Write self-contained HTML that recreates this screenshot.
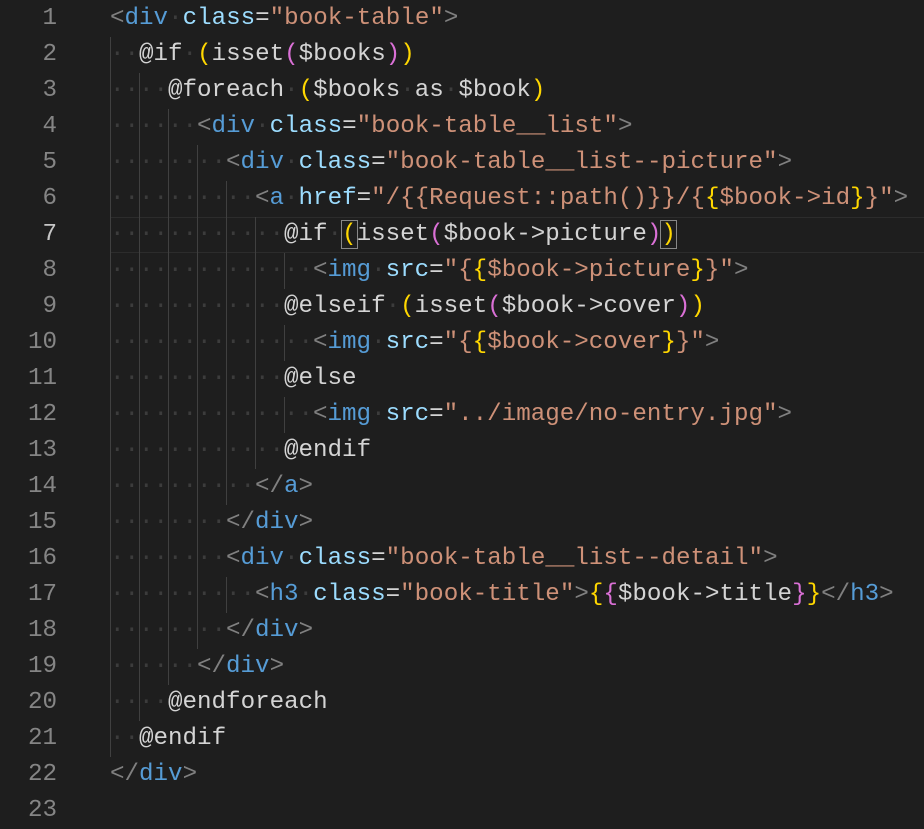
<!DOCTYPE html>
<html><head><meta charset="utf-8"><style>
body{margin:0;background:#1e1e1e;width:924px;height:826px;overflow:hidden;font-family:"Liberation Mono",monospace;font-size:24.2px;}
.ln{position:absolute;left:0;width:57px;text-align:right;color:#858585;}
.l{position:absolute;left:110px;right:0;height:36px;line-height:36px;white-space:pre;color:#d4d4d4;}
.n{position:absolute;left:0;width:57px;text-align:right;height:36px;line-height:36px;color:#858585;}
.i{display:inline-block;width:29px;box-shadow:inset 1px 0 0 #404040;color:#3c3c3c;height:36px;vertical-align:top;}
.p{color:#808080}.t{color:#569cd6}.a{color:#9cdcfe}.s{color:#ce9178}.y{color:#ffd700}.m{color:#da70d6}.w{color:#d4d4d4}.d{color:#3c3c3c}
.cur{position:absolute;left:110px;right:0;top:217px;height:34px;border-top:1px solid #2c2c2c;border-bottom:1px solid #2c2c2c;}
.bx{outline:1px solid #888;}
</style></head><body>
<div class="cur"></div>
<div class="n" style="top:1px">1</div><div class="l" style="top:1px"><span class="p">&lt;</span><span class="t">div</span><span class="d">·</span><span class="a">class</span><span class="w">=</span><span class="s">"book-table"</span><span class="p">&gt;</span></div>
<div class="n" style="top:37px">2</div><div class="l" style="top:37px"><span class="i">··</span><span class="w">@if</span><span class="d">·</span><span class="y">(</span>isset<span class="m">(</span>$books<span class="m">)</span><span class="y">)</span></div>
<div class="n" style="top:73px">3</div><div class="l" style="top:73px"><span class="i">··</span><span class="i">··</span>@foreach<span class="d">·</span><span class="y">(</span>$books<span class="d">·</span>as<span class="d">·</span>$book<span class="y">)</span></div>
<div class="n" style="top:109px">4</div><div class="l" style="top:109px"><span class="i">··</span><span class="i">··</span><span class="i">··</span><span class="p">&lt;</span><span class="t">div</span><span class="d">·</span><span class="a">class</span>=<span class="s">"book-table__list"</span><span class="p">&gt;</span></div>
<div class="n" style="top:145px">5</div><div class="l" style="top:145px"><span class="i">··</span><span class="i">··</span><span class="i">··</span><span class="i">··</span><span class="p">&lt;</span><span class="t">div</span><span class="d">·</span><span class="a">class</span>=<span class="s">"book-table__list--picture"</span><span class="p">&gt;</span></div>
<div class="n" style="top:181px">6</div><div class="l" style="top:181px"><span class="i">··</span><span class="i">··</span><span class="i">··</span><span class="i">··</span><span class="i">··</span><span class="p">&lt;</span><span class="t">a</span><span class="d">·</span><span class="a">href</span>=<span class="s">"/{{Request::path()}}/{</span><span class="y">{</span><span class="s">$book-&gt;id</span><span class="y">}</span><span class="s">}"</span><span class="p">&gt;</span></div>
<div class="n" style="top:217px;color:#c6c6c6">7</div><div class="l" style="top:217px"><span class="i">··</span><span class="i">··</span><span class="i">··</span><span class="i">··</span><span class="i">··</span><span class="i">··</span>@if<span class="d">·</span><span class="y bx">(</span>isset<span class="m">(</span>$book-&gt;picture<span class="m">)</span><span class="y bx">)</span></div>
<div class="n" style="top:253px">8</div><div class="l" style="top:253px"><span class="i">··</span><span class="i">··</span><span class="i">··</span><span class="i">··</span><span class="i">··</span><span class="i">··</span><span class="i">··</span><span class="p">&lt;</span><span class="t">img</span><span class="d">·</span><span class="a">src</span>=<span class="s">"{</span><span class="y">{</span><span class="s">$book-&gt;picture</span><span class="y">}</span><span class="s">}"</span><span class="p">&gt;</span></div>
<div class="n" style="top:289px">9</div><div class="l" style="top:289px"><span class="i">··</span><span class="i">··</span><span class="i">··</span><span class="i">··</span><span class="i">··</span><span class="i">··</span>@elseif<span class="d">·</span><span class="y">(</span>isset<span class="m">(</span>$book-&gt;cover<span class="m">)</span><span class="y">)</span></div>
<div class="n" style="top:325px">10</div><div class="l" style="top:325px"><span class="i">··</span><span class="i">··</span><span class="i">··</span><span class="i">··</span><span class="i">··</span><span class="i">··</span><span class="i">··</span><span class="p">&lt;</span><span class="t">img</span><span class="d">·</span><span class="a">src</span>=<span class="s">"{</span><span class="y">{</span><span class="s">$book-&gt;cover</span><span class="y">}</span><span class="s">}"</span><span class="p">&gt;</span></div>
<div class="n" style="top:361px">11</div><div class="l" style="top:361px"><span class="i">··</span><span class="i">··</span><span class="i">··</span><span class="i">··</span><span class="i">··</span><span class="i">··</span>@else</div>
<div class="n" style="top:397px">12</div><div class="l" style="top:397px"><span class="i">··</span><span class="i">··</span><span class="i">··</span><span class="i">··</span><span class="i">··</span><span class="i">··</span><span class="i">··</span><span class="p">&lt;</span><span class="t">img</span><span class="d">·</span><span class="a">src</span>=<span class="s">"../image/no-entry.jpg"</span><span class="p">&gt;</span></div>
<div class="n" style="top:433px">13</div><div class="l" style="top:433px"><span class="i">··</span><span class="i">··</span><span class="i">··</span><span class="i">··</span><span class="i">··</span><span class="i">··</span>@endif</div>
<div class="n" style="top:469px">14</div><div class="l" style="top:469px"><span class="i">··</span><span class="i">··</span><span class="i">··</span><span class="i">··</span><span class="i">··</span><span class="p">&lt;/</span><span class="t">a</span><span class="p">&gt;</span></div>
<div class="n" style="top:505px">15</div><div class="l" style="top:505px"><span class="i">··</span><span class="i">··</span><span class="i">··</span><span class="i">··</span><span class="p">&lt;/</span><span class="t">div</span><span class="p">&gt;</span></div>
<div class="n" style="top:541px">16</div><div class="l" style="top:541px"><span class="i">··</span><span class="i">··</span><span class="i">··</span><span class="i">··</span><span class="p">&lt;</span><span class="t">div</span><span class="d">·</span><span class="a">class</span>=<span class="s">"book-table__list--detail"</span><span class="p">&gt;</span></div>
<div class="n" style="top:577px">17</div><div class="l" style="top:577px"><span class="i">··</span><span class="i">··</span><span class="i">··</span><span class="i">··</span><span class="i">··</span><span class="p">&lt;</span><span class="t">h3</span><span class="d">·</span><span class="a">class</span>=<span class="s">"book-title"</span><span class="p">&gt;</span><span class="y">{</span><span class="m">{</span>$book-&gt;title<span class="m">}</span><span class="y">}</span><span class="p">&lt;/</span><span class="t">h3</span><span class="p">&gt;</span></div>
<div class="n" style="top:613px">18</div><div class="l" style="top:613px"><span class="i">··</span><span class="i">··</span><span class="i">··</span><span class="i">··</span><span class="p">&lt;/</span><span class="t">div</span><span class="p">&gt;</span></div>
<div class="n" style="top:649px">19</div><div class="l" style="top:649px"><span class="i">··</span><span class="i">··</span><span class="i">··</span><span class="p">&lt;/</span><span class="t">div</span><span class="p">&gt;</span></div>
<div class="n" style="top:685px">20</div><div class="l" style="top:685px"><span class="i">··</span><span class="i">··</span>@endforeach</div>
<div class="n" style="top:721px">21</div><div class="l" style="top:721px"><span class="i">··</span>@endif</div>
<div class="n" style="top:757px">22</div><div class="l" style="top:757px"><span class="p">&lt;/</span><span class="t">div</span><span class="p">&gt;</span></div>
<div class="n" style="top:793px">23</div>
</body></html>
